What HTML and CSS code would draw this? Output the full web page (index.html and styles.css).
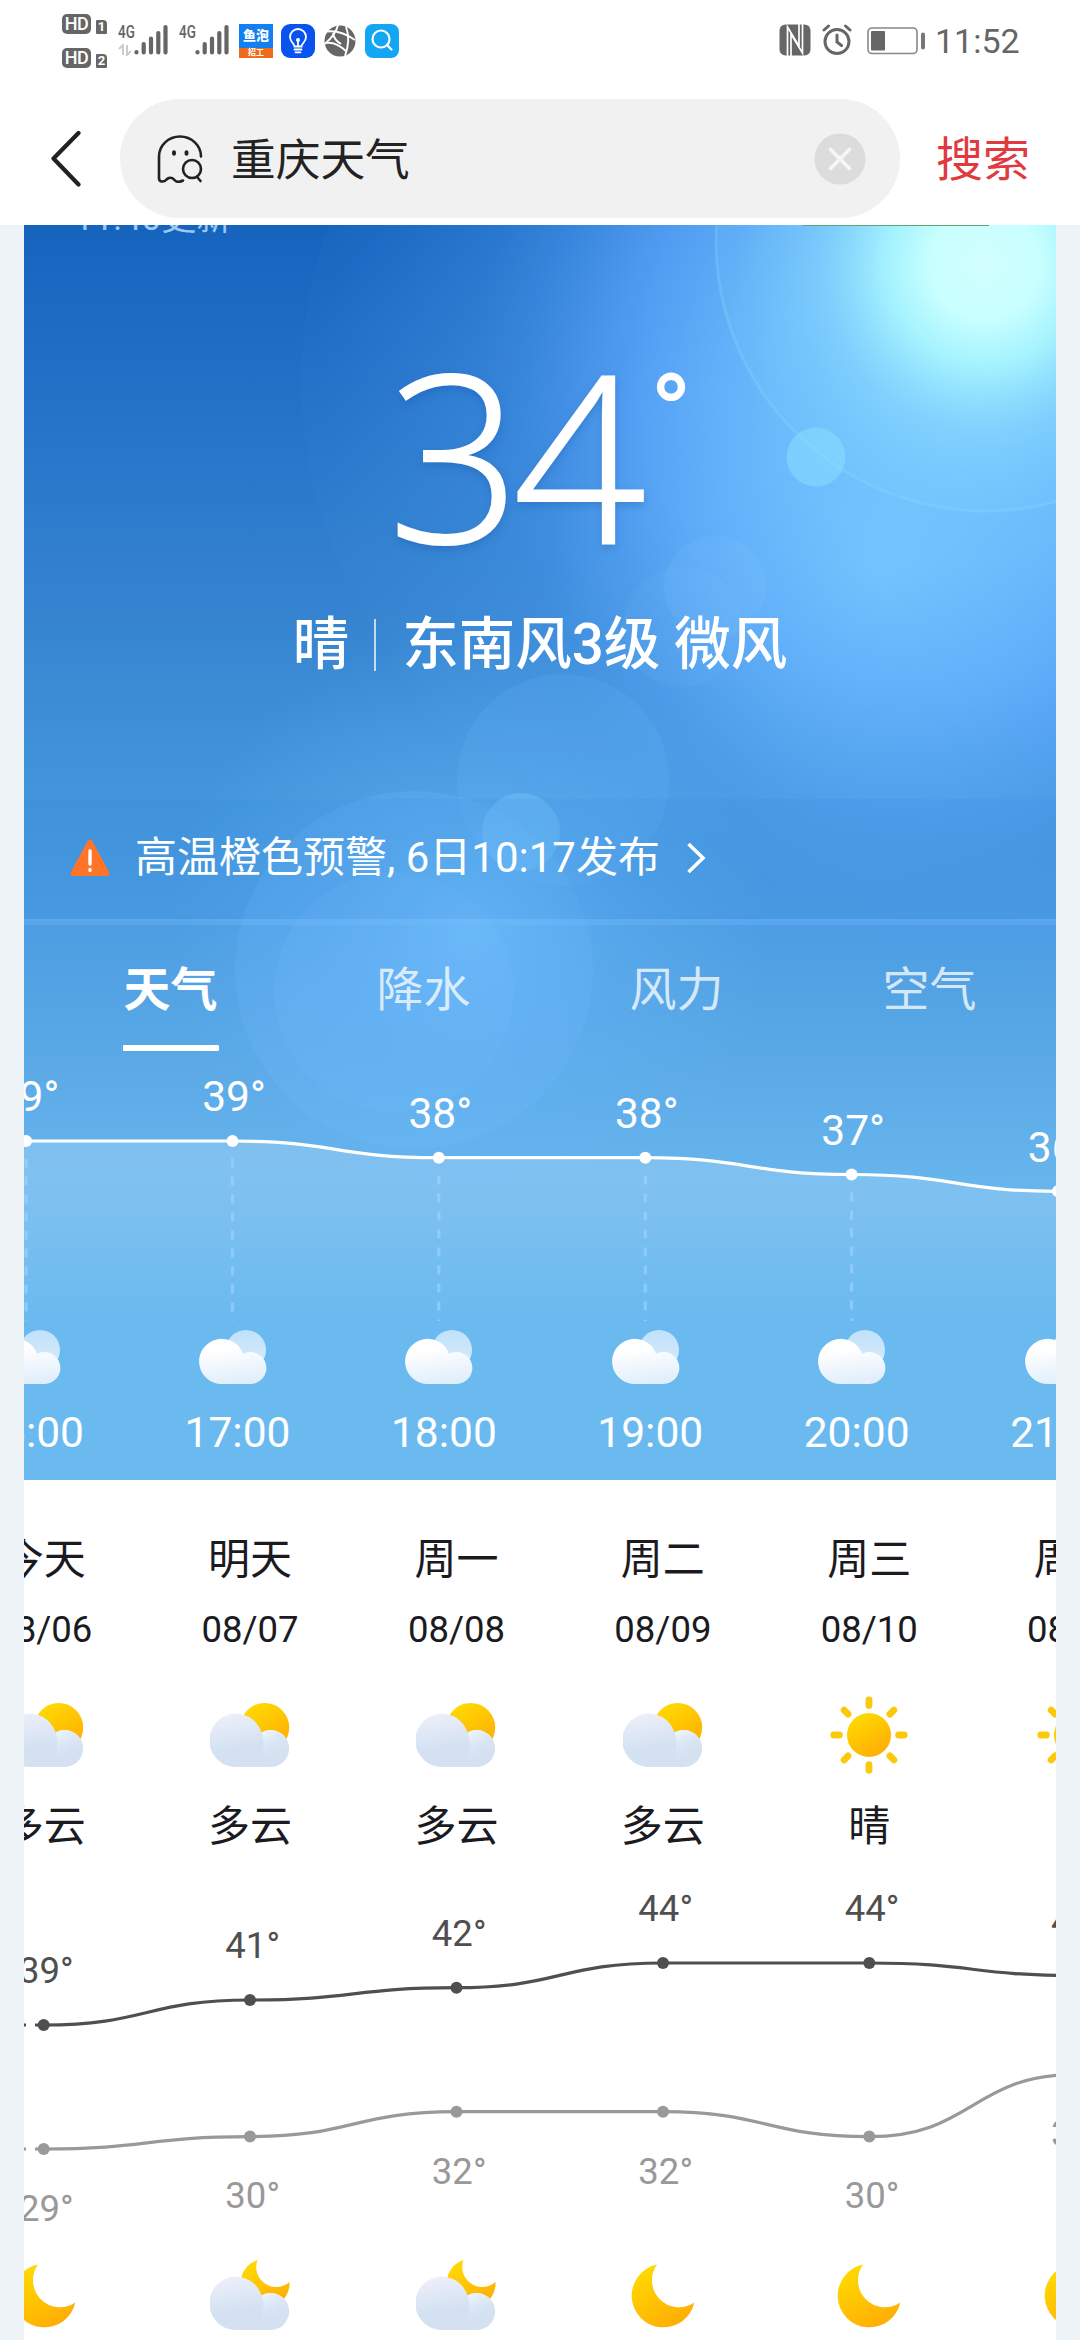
FILE: index.html
```html
<!DOCTYPE html>
<html lang="zh-CN">
<head>
<meta charset="utf-8">
<title>重庆天气</title>
<link rel="stylesheet" href="styles.css">
</head>
<body>
<svg class="defs" width="0" height="0">
  <defs>
    <linearGradient id="gCloudW" x1="0" y1="0" x2="0.2" y2="1"><stop offset="0.3" stop-color="#fff"/><stop offset="1" stop-color="#e2effb"/></linearGradient>
    <linearGradient id="gDisc" x1="0" y1="0" x2="0" y2="1"><stop offset="0" stop-color="#c0e1fb"/><stop offset="1" stop-color="#d9ecfb"/></linearGradient>
    <linearGradient id="gCloud" x1="0.2" y1="0" x2="0.45" y2="1"><stop offset="0" stop-color="#eeeffa"/><stop offset="0.65" stop-color="#d3e1f2"/><stop offset="1" stop-color="#d5e1f0"/></linearGradient>
    <linearGradient id="gLobe" x1="0.2" y1="0" x2="0.5" y2="0.8"><stop offset="0" stop-color="#ecf5fe"/><stop offset="0.4" stop-color="#e2edf9" stop-opacity="0.600"/><stop offset="1" stop-color="#d5e1f0" stop-opacity="0"/></linearGradient>
    <linearGradient id="gSun" x1="0.2" y1="0" x2="0.8" y2="1"><stop offset="0" stop-color="#ffdc00"/><stop offset="1" stop-color="#ffaa05"/></linearGradient>
    <symbol id="cloudy" viewBox="0 0 68 54">
      <circle cx="47" cy="20" r="20" fill="url(#gDisc)"/>
      <path d="M22.600 54 A22.600 22.600 0 1 1 44 23.800 A16 16 0 1 1 51.500 54 Z" fill="url(#gCloudW)"/>
    </symbol>
    <symbol id="partly" viewBox="0 0 80 64">
      <circle cx="54.700" cy="24.500" r="24.500" fill="url(#gSun)"/>
      <path d="M27 64 A26.700 26.700 0 1 1 51.500 29.400 A18.500 18.500 0 1 1 60.800 64 Z" fill="url(#gCloud)"/>
      <path d="M51.500 29.400 A18.500 18.500 0 1 1 60.800 64 Q50 60 53 46 Q54.500 37 51.500 29.400Z" fill="url(#gLobe)"/>
    </symbol>
    <symbol id="night" viewBox="0 0 80 72">
      <path d="M47.500 2 A24.500 24.500 0 1 0 79.500 24 A20 20 0 0 1 47.500 2Z" fill="url(#gSun)"/>
      <path d="M27 72 A26.700 26.700 0 1 1 51.500 37.400 A18.500 18.500 0 1 1 60.800 72 Z" fill="url(#gCloud)"/>
      <path d="M51.500 37.400 A18.500 18.500 0 1 1 60.800 72 Q50 68 53 54 Q54.500 45 51.500 37.400Z" fill="url(#gLobe)"/>
    </symbol>
    <symbol id="moon" viewBox="0 0 64 65">
      <path d="M26 .6 A31.700 31.700 0 1 0 63.300 38.500 A27 27 0 0 1 26 .6Z" fill="url(#gSun)"/>
    </symbol>
    <symbol id="sun" viewBox="0 0 80 80">
      <circle cx="40" cy="40" r="22" fill="url(#gSun)"/>
      <g stroke="#fcc80a" stroke-width="6.800" stroke-linecap="round">
        <path d="M40 4.800v5.600M40 69.600v5.600M4.800 40h5.600M69.600 40h5.600M15.100 15.100l4 4M60.900 60.900l4 4M15.100 64.900l4-4M60.900 19.100l4-4"/>
      </g>
    </symbol>
    <symbol id="bars" viewBox="0 0 34 32">
      <g stroke="#666" stroke-width="4.200" stroke-linecap="round"><path d="M2.500 28v.5M9.700 20v8.500M17 14.500v14M24.300 9v19.500M31.500 3v25.500"/></g>
    </symbol>
  </defs>
</svg>

<div class="status">
  <div class="hds">
    <div class="hd-row"><span class="hd">HD</span><span class="sim">1</span></div>
    <div class="hd-row"><span class="hd">HD</span><span class="sim">2</span></div>
  </div>
  <div class="net"><span class="g4">4G</span><svg class="bars"><use href="#bars"/></svg>
    <svg class="updown" viewBox="0 0 16 12"><path d="M1 5l4-4v10M9 1v10l4-4" fill="none" stroke="#ccc" stroke-width="2"/></svg></div>
  <div class="net net2"><span class="g4">4G</span><svg class="bars"><use href="#bars"/></svg></div>
  <div class="fish"><span class="fish-name">鱼泡</span><span class="fish-tag">招工</span></div>
  <svg class="app bulb" viewBox="0 0 34 34"><rect width="34" height="34" rx="9" fill="#0a52f0"/><g fill="none" stroke="#fff" stroke-width="1.800" stroke-linecap="round"><path d="M13.500 22.500c0-3-4.500-4.500-4.500-9.500a8 8 0 0 1 16 0c0 5-4.500 6.500-4.500 9.500zM17 17v5.500M13.500 25.500h7M14.500 28.300h5"/></g><circle cx="17" cy="16" r="2" fill="#fff"/></svg>
  <svg class="app globe" viewBox="0 0 32 32"><circle cx="16" cy="16" r="15.500" fill="#666"/><g fill="none" stroke="#fff" stroke-width="1.900"><path d="M14 0Q12 9 1 19M3 6.500Q17 5 31 15M22 2Q27 14 21 31M1 18Q12 16 23 27M9 8Q10 15 17 19"/></g></svg>
  <svg class="app search-app" viewBox="0 0 34 34"><rect width="34" height="34" rx="8" fill="#12a6f5"/><circle cx="16" cy="15" r="8.500" fill="none" stroke="#fff" stroke-width="2.200"/><path d="M22 21l4.500 4.500" stroke="#fff" stroke-width="2.200" stroke-linecap="round"/></svg>
  <div class="status-right">
    <svg class="nfc" viewBox="0 0 32 32"><rect x=".5" y=".5" width="31" height="31" rx="6" fill="#666"/><path d="M8.500 32V3L20 22V0M23.500 0V29L12 10V32" stroke="#fff" stroke-width="1.700" fill="none"/></svg>
    <svg class="alarm" viewBox="0 0 30 32"><g fill="none" stroke="#666" stroke-width="3" stroke-linecap="round"><circle cx="15" cy="17.500" r="12"/><path d="M2 6l4.500-4M28 6l-4.500-4M15 11v7l4.500 3.500"/></g></svg>
    <svg class="battery" viewBox="0 0 58 28"><rect x="1" y="1" width="49" height="25.500" rx="4" fill="none" stroke="#888" stroke-width="1.600"/><rect x="4" y="4" width="14" height="19.500" rx="1" fill="#666"/><rect x="54" y="5.500" width="4" height="17" rx="2" fill="#777"/></svg>
    <span class="clock">11:52</span>
  </div>
</div>

<div class="searchbar">
  <svg class="back" viewBox="0 0 30 56"><path d="M27.500 2L2.500 27.500L27.500 53.500" fill="none" stroke="#222" stroke-width="4.200" stroke-linecap="round" stroke-linejoin="round"/></svg>
  <div class="pill">
    <svg class="ghost" viewBox="0 0 46 48"><g fill="none" stroke="#222" stroke-width="2.600" stroke-linecap="round"><path d="M44 21.500A21 20 0 0 0 2 21.500V43C2 48 7.500 47 9.500 44.500C11.500 42.500 14.500 41.800 17 44.500C19.500 47.500 22.500 47.500 26 45.500"/><circle cx="35" cy="34" r="9"/><path d="M40.500 42.500l3 3.500"/></g><ellipse cx="17" cy="18" rx="2" ry="2.800" fill="#222"/><ellipse cx="29.500" cy="18" rx="2" ry="2.800" fill="#222"/></svg>
    <span class="query">重庆天气</span>
    <svg class="clear" viewBox="0 0 52 52"><circle cx="26" cy="26" r="25.600" fill="#dcdcdc"/><path d="M16.500 16.500l19 19M35.500 16.500l-19 19" stroke="#f6f6f6" stroke-width="3.800" stroke-linecap="round"/></svg>
  </div>
  <span class="go">搜索</span>
</div>

<main class="page">
  <section class="hero">
    <svg class="sky" viewBox="24 225 1032 1255">
      <defs>
        <radialGradient id="halo" gradientUnits="userSpaceOnUse" cx="960" cy="370" r="640"><stop offset="0" stop-color="#7ed0ff"/><stop offset="0.3" stop-color="#70c0ff" stop-opacity="0.920"/><stop offset="0.500" stop-color="#5faaff" stop-opacity="0.800"/><stop offset="0.75" stop-color="#509ff3" stop-opacity="0.300"/><stop offset="1" stop-color="#4a9aec" stop-opacity="0"/></radialGradient>
        <radialGradient id="halo2" gradientUnits="userSpaceOnUse" cx="880" cy="570" r="330"><stop offset="0" stop-color="#7accff" stop-opacity="0.650"/><stop offset="0.500" stop-color="#70c0ff" stop-opacity="0.350"/><stop offset="1" stop-color="#60b0ff" stop-opacity="0"/></radialGradient>
        <radialGradient id="core" gradientUnits="userSpaceOnUse" cx="985" cy="265" r="250"><stop offset="0" stop-color="#d2ffff"/><stop offset="0.220" stop-color="#c8ffff"/><stop offset="0.400" stop-color="#b0fdff" stop-opacity="0.800"/><stop offset="0.660" stop-color="#98e6ff" stop-opacity="0.330"/><stop offset="1" stop-color="#80d0ff" stop-opacity="0"/></radialGradient>
        <radialGradient id="glow" gradientUnits="userSpaceOnUse" cx="470" cy="930" r="300"><stop offset="0" stop-color="#70c2ff" stop-opacity="0.700"/><stop offset="0.500" stop-color="#66b6fb" stop-opacity="0.320"/><stop offset="1" stop-color="#66b6fb" stop-opacity="0"/></radialGradient>
      </defs>
      <rect x="24" y="225" width="1032" height="1255" fill="url(#halo)"/>
      <rect x="24" y="225" width="1032" height="1255" fill="url(#halo2)"/>
      <circle cx="755" cy="380" r="454" fill="#6ab8ff" opacity="0.040"/>
      <rect x="24" y="225" width="1032" height="1255" fill="url(#glow)"/>
      <circle cx="986" cy="241" r="270" fill="#8adfff" fill-opacity="0.100" stroke="#a5dcff" stroke-opacity="0.220" stroke-width="3"/>
      <rect x="24" y="225" width="1032" height="500" fill="url(#core)"/>
      <circle cx="816" cy="457" r="29.500" fill="#8fe4ff" opacity="0.450"/>
      <circle cx="715" cy="587" r="51" fill="#8accff" opacity="0.120"/>
      <circle cx="683" cy="627" r="60" fill="#8accff" opacity="0.080"/>
      <circle cx="563" cy="780" r="106" fill="#6fbcff" opacity="0.150"/>
      <circle cx="521" cy="832" r="39" fill="#80d2ff" opacity="0.300"/>
      <circle cx="414" cy="970" r="179" fill="#75beff" opacity="0.180"/>
      <circle cx="394" cy="992" r="120" fill="#75beff" opacity="0.180"/>
    </svg>
    <div class="badge-edge"></div>
    <div class="updated">11:40更新</div>
    <div class="temp"><span class="num">34</span><span class="deg">°</span></div>
    <div class="desc"><span>晴</span><i class="bar"></i><span>东南风3级 微风</span></div>
    <div class="alert">
      <svg class="warn" viewBox="0 0 40 38"><path d="M20 3L37 34.500H3Z" fill="#ff7426" stroke="#ff7426" stroke-width="5" stroke-linejoin="round"/><path d="M20 12v13M20 30.500v1" stroke="#fff" stroke-width="3.400" stroke-linecap="round"/></svg>
      <span class="alert-text">高温橙色预警, 6日10:17发布</span>
      <svg class="more" viewBox="0 0 20 32"><path d="M2.500 2L17 16L2.500 30" fill="none" stroke="#fff" stroke-width="3.600"/></svg>
    </div>
    <nav class="tabs"><span class="tab on">天气</span><span class="tab">降水</span><span class="tab">风力</span><span class="tab">空气</span></nav>
    <svg class="hour-chart" viewBox="24 1060 1032 262">
      <defs><linearGradient id="area" gradientUnits="userSpaceOnUse" x1="0" y1="1140" x2="0" y2="1321"><stop offset="0" stop-color="#fff" stop-opacity="0.190"/><stop offset="0.400" stop-color="#fff" stop-opacity="0.140"/><stop offset="1" stop-color="#fff" stop-opacity="0"/></linearGradient></defs>
      <path d="M-180 1141H232.500C335.500 1141 335.500 1157.700 438.800 1157.700H645.300C748.300 1157.700 748.300 1174.500 851.600 1174.500C955 1174.500 955 1191.300 1058 1191.300V1322H-180Z" fill="url(#area)"/>
      <path class="guide" d="M26.100 1158.500V1321M232.500 1158.500V1321M438.800 1175.500V1321M645.300 1175.500V1321M851.600 1192.500V1321"/>
      <path d="M-180 1141H232.500C335.500 1141 335.500 1157.700 438.800 1157.700H645.300C748.300 1157.700 748.300 1174.500 851.600 1174.500C955 1174.500 955 1191.300 1058 1191.300" fill="none" stroke="#fff" stroke-width="3.200"/>
      <g fill="#fff"><circle cx="26.100" cy="1141" r="6"/><circle cx="232.500" cy="1141" r="6"/><circle cx="438.800" cy="1157.700" r="6"/><circle cx="645.300" cy="1157.700" r="6"/><circle cx="851.600" cy="1174.500" r="6"/><circle cx="1058" cy="1191.300" r="6"/></g>
      <g class="hour-temp"><text x="27.500" y="1111">39°</text><text x="234" y="1111">39°</text><text x="440.300" y="1128">38°</text><text x="646.800" y="1128">38°</text><text x="853.100" y="1145">37°</text><text x="1059.500" y="1161.500">36°</text></g>
    </svg>
    <div class="hours">
      <div class="hour"><svg class="hicon"><use href="#cloudy"/></svg><span>16:00</span></div>
      <div class="hour"><svg class="hicon"><use href="#cloudy"/></svg><span>17:00</span></div>
      <div class="hour"><svg class="hicon"><use href="#cloudy"/></svg><span>18:00</span></div>
      <div class="hour"><svg class="hicon"><use href="#cloudy"/></svg><span>19:00</span></div>
      <div class="hour"><svg class="hicon"><use href="#cloudy"/></svg><span>20:00</span></div>
      <div class="hour"><svg class="hicon"><use href="#cloudy"/></svg><span>21:00</span></div>
    </div>
  </section>

  <section class="daily">
    <div class="days">
      <div class="day"><span class="name">今天</span><span class="date">08/06</span><svg class="dicon"><use href="#partly"/></svg><span class="cond">多云</span></div>
      <div class="day"><span class="name">明天</span><span class="date">08/07</span><svg class="dicon"><use href="#partly"/></svg><span class="cond">多云</span></div>
      <div class="day"><span class="name">周一</span><span class="date">08/08</span><svg class="dicon"><use href="#partly"/></svg><span class="cond">多云</span></div>
      <div class="day"><span class="name">周二</span><span class="date">08/09</span><svg class="dicon"><use href="#partly"/></svg><span class="cond">多云</span></div>
      <div class="day"><span class="name">周三</span><span class="date">08/10</span><svg class="dicon dsun"><use href="#sun"/></svg><span class="cond">晴</span></div>
      <div class="day"><span class="name">周四</span><span class="date">08/11</span><svg class="dicon dsun"><use href="#sun"/></svg><span class="cond">晴</span></div>
    </div>
    <svg class="day-chart" viewBox="24 1870 1032 380">
      <g fill="none" stroke-width="3.200">
        <g stroke="#4f4f4f"><path d="M16 2025h10M35 2025h9"/><path d="M43.700 2025C147 2025 147 2000 250 2000C353.300 2000 353.300 1987.700 456.500 1987.700C559.700 1987.700 559.700 1963 663 1963H869.300C972.500 1963 972.500 1975.500 1075.600 1975.500"/></g>
        <g stroke="#999"><path d="M16 2149h10M35 2149h9"/><path d="M43.700 2149C147 2149 147 2136.600 250 2136.600C353.300 2136.600 353.300 2111.700 456.500 2111.700H663C766 2111.700 766 2136.600 869.300 2136.600C972.500 2136.600 972.500 2074.500 1075.600 2074.500"/></g>
      </g>
      <g fill="#4f4f4f"><circle cx="43.700" cy="2025" r="6"/><circle cx="250" cy="2000" r="6"/><circle cx="456.500" cy="1987.700" r="6"/><circle cx="663" cy="1963" r="6"/><circle cx="869.300" cy="1963" r="6"/></g>
      <g fill="#999"><circle cx="43.700" cy="2149" r="6"/><circle cx="250" cy="2136.600" r="6"/><circle cx="456.500" cy="2111.700" r="6"/><circle cx="663" cy="2111.700" r="6"/><circle cx="869.300" cy="2136.600" r="6"/></g>
      <g class="high"><text x="46.400" y="1983">39°</text><text x="252.700" y="1958">41°</text><text x="459.200" y="1946">42°</text><text x="665.700" y="1921">44°</text><text x="872" y="1921">44°</text><text x="1078.300" y="1933.500">43°</text></g>
      <g class="low"><text x="46.400" y="2220.700">29°</text><text x="252.700" y="2208.300">30°</text><text x="459.200" y="2183.500">32°</text><text x="665.700" y="2183.500">32°</text><text x="872" y="2208.300">30°</text><text x="1078.300" y="2146">35°</text></g>
    </svg>
    <div class="nights">
      <div class="night"><svg class="moon"><use href="#moon"/></svg></div>
      <div class="night"><svg class="cmoon"><use href="#night"/></svg></div>
      <div class="night"><svg class="cmoon"><use href="#night"/></svg></div>
      <div class="night"><svg class="moon"><use href="#moon"/></svg></div>
      <div class="night"><svg class="moon"><use href="#moon"/></svg></div>
      <div class="night"><svg class="moon"><use href="#moon"/></svg></div>
    </div>
  </section>
</main>
</body>
</html>
```
FILE: styles.css
```css
* { box-sizing: border-box; }
html, body { margin: 0; height: 2340px; overflow: hidden; }
body {
  width: 1080px;
  background: #eef3f7;
  font-family: Roboto, "Noto Sans CJK SC", sans-serif;
  display: flex;
  flex-direction: column;
}
svg { display: block; flex: none; }
.defs { position: absolute; }

/* status bar */
.status {
  height: 80px;
  flex: none;
  background: #fff;
  display: flex;
  align-items: flex-start;
  padding: 0 63px 0 62px;
  color: #666;
}
.hds { width: 56px; padding-top: 14px; display: flex; flex-direction: column; gap: 14px; }
.hd-row { display: flex; gap: 5px; align-items: flex-end; height: 20px; }
.hd {
  width: 29px; height: 20px; border-radius: 5px; background: #666; color: #fff;
  font-size: 18px; font-weight: 500; line-height: 20px; text-align: center; letter-spacing: -0.500px;
}
.sim {
  width: 11px; height: 14px; border-radius: 1px 4px 1px 1px; background: #666; color: #fff;
  font-size: 13px; font-weight: 700; line-height: 14px; text-align: center;
}
.net { position: relative; width: 61px; height: 80px; display: flex; padding-top: 24px; }
.net2 { width: 59px; }
.g4 { width: 16px; font-size: 18px; line-height: 16px; font-weight: 500; transform: scaleX(0.750); transform-origin: 0 0; }
.bars { width: 34px; height: 32px; }
.updown { position: absolute; left: 0; top: 44px; width: 16px; height: 12px; }
.fish {
  width: 34px; height: 34px; margin: 24px 8px 0 1px; overflow: hidden;
  background: #1280f0; color: #fff; display: flex; flex-direction: column;
}
.fish-name { font-size: 13px; line-height: 24px; height: 24px; font-weight: 900; text-align: center; }
.fish-tag { background: #f06a1c; font-size: 8px; line-height: 10px; height: 10px; font-weight: 700; text-align: center; }
.app { width: 34px; height: 34px; margin-top: 24px; }
.globe { width: 32px; margin: 24px 9px 0 9px; }
.status-right { margin-left: auto; display: flex; padding-top: 24px; }
.nfc { width: 32px; height: 32px; margin-right: 11px; }
.alarm { width: 30px; height: 32px; margin-right: 15px; }
.battery { width: 58px; height: 28px; margin: 3px 10px 0 0; }
.clock { font-size: 34px; line-height: 34px; width: 82px; }

/* search bar */
.searchbar {
  height: 145px;
  flex: none;
  background: #fff;
  display: flex;
  padding: 19px 0 0 51px;
}
.back { width: 30px; height: 56px; margin: 32px 39px 0 0; }
.pill {
  width: 780px; height: 119px; border-radius: 60px; background: #f1f1f1;
  display: flex; align-items: center; padding: 0 34px 0 37px;
}
.ghost { width: 46px; height: 48px; margin-right: 28px; }
.query { font-size: 44.700px; color: #222; line-height: 60px; flex: 1; padding-top: 4px; }
.clear { width: 52px; height: 52px; }
.go { margin-left: 36px; font-size: 47px; line-height: 60px; color: #e03a3f; padding-top: 31px; }

/* card column */
.page { flex: 1; margin: 0 24px; overflow: hidden; background: #fff; }
.hero {
  position: relative;
  height: 1255px;
  overflow: hidden;
  color: #fff;
  background: linear-gradient(180deg, #1563bd 0, #2472c8 180px, #3583d0 380px, #4295da 565px, #4b9ce2 690px, #5aa9e6 830px, #66b5ed 960px, #6abaf0 1100px, #6abaf0 100%);
}
.hero > * { position: relative; }
.hero > .sky { position: absolute; inset: 0; width: 1032px; height: 1255px; }
.hero > .badge-edge { position: absolute; left: 779px; top: 0; width: 186px; height: 1px; background: #5fa578; }
.updated { margin-top: -25px; height: 38px; line-height: 38px; padding-left: 50px; font-size: 35px; color: #9cc8f8; }
.temp { height: 330px; display: flex; padding-left: 364px; text-shadow: 0 4px 8px rgba(20, 80, 160, 0.350); }
.num { font-family: "Open Sans", Roboto, sans-serif; font-weight: 300; font-size: 233px; line-height: 280px; padding-top: 75px; letter-spacing: -8px; width: 262px; -webkit-text-stroke: 2px #fff; }
.deg { font-size: 110px; font-weight: 500; line-height: 100px; padding-top: 127px; text-shadow: none; }
.desc { height: 80px; margin-top: 37px; display: flex; align-items: center; justify-content: center; font-size: 56.500px; font-weight: 500; line-height: 80px; }
.bar { width: 2px; height: 52px; background: rgba(255, 255, 255, 0.700); margin: 0 26px 0 25px; }
.alert {
  height: 126px; margin-top: 114px; padding: 0 0 6px 46px; display: flex; align-items: center;
  background: rgba(35, 125, 215, 0.100); border-bottom: 6px solid rgba(120, 190, 255, 0.300); background-clip: padding-box;
}
.warn { width: 40px; height: 38px; margin-right: 25px; }
.alert-text { font-size: 42px; line-height: 60px; padding-top: 4px; }
.warn, .more { margin-top: 3px; }
.more { width: 20px; height: 32px; margin-left: 26px; }
.tabs { height: 135px; display: flex; padding-left: 20px; }
.tab { width: 253px; text-align: center; font-size: 47px; line-height: 70px; padding-top: 30px; color: rgba(255, 255, 255, 0.750); }
.tab.on { color: #fff; font-weight: 700; }
.tab.on::after { content: ""; display: block; width: 96px; height: 6px; margin: 20px auto 0; background: #fff; border-radius: 1px; }
.hour-chart { width: 1032px; height: 262px; }
.guide { stroke: #9ad2ff; stroke-width: 3.200; stroke-dasharray: 9 9; opacity: 0.700; fill: none; }
.hour-temp { fill: #fff; font-size: 42.500px; text-anchor: middle; }
.hours { display: flex; margin-left: -100.600px; width: 1239px; padding-top: 8px; }
.hour { width: 206.400px; flex: none; display: flex; flex-direction: column; align-items: center; }
.hicon { width: 68px; height: 54px; }
.hour span { font-size: 42.500px; line-height: 50px; margin-top: 24px; padding-left: 9px; }

/* daily forecast */
.daily { height: 860px; background: #fff; overflow: hidden; color: #1b1b1f; padding-top: 50px; }
.days, .nights { display: flex; margin-left: -83.500px; width: 1239px; }
.days { height: 340px; }
.day { width: 206.400px; flex: none; display: flex; flex-direction: column; align-items: center; }
.name, .cond { font-size: 42px; line-height: 60px; }
.date { font-size: 36.500px; line-height: 40px; margin-top: 20px; }
.dicon { width: 80px; height: 64px; margin: 53px 0 30px; }
.dicon.dsun { height: 80px; margin: 45px 0 22px; }
.day-chart { width: 1032px; height: 380px; }
.high, .low { font-size: 36.500px; text-anchor: middle; }
.high { fill: #4f4f4f; }
.low { fill: #999; }
.night { width: 206.400px; flex: none; display: flex; justify-content: center; }
.moon { width: 64px; height: 65px; margin-top: 14px; }
.cmoon { width: 80px; height: 72px; margin-top: 8px; }
```
